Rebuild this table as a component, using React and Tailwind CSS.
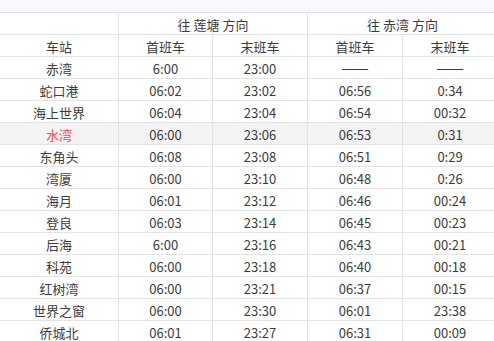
const rows = [
  ["赤湾", "6:00", "23:00", "——", "——"],
  ["蛇口港", "06:02", "23:02", "06:56", "0:34"],
  ["海上世界", "06:04", "23:04", "06:54", "00:32"],
  ["水湾", "06:00", "23:06", "06:53", "0:31", true],
  ["东角头", "06:08", "23:08", "06:51", "0:29"],
  ["湾厦", "06:00", "23:10", "06:48", "0:26"],
  ["海月", "06:01", "23:12", "06:46", "00:24"],
  ["登良", "06:03", "23:14", "06:45", "00:23"],
  ["后海", "6:00", "23:16", "06:43", "00:21"],
  ["科苑", "06:00", "23:18", "06:40", "00:18"],
  ["红树湾", "06:00", "23:21", "06:37", "00:15"],
  ["世界之窗", "06:00", "23:30", "06:01", "23:38"],
  ["侨城北", "06:01", "23:27", "06:31", "00:09"],
];

const cell = "h-[22px] p-0 pt-px border border-[#e3e3e3] text-center font-normal leading-none";

const val = (v) =>
  v === "——" ? <span className="font-['Liberation_Sans',sans-serif]">{v}</span> : v;

export default function App() {
  return (
    <div className="w-[494px] h-[341px] overflow-hidden bg-white text-[13px] text-[#3c3c3c] font-['Microsoft_YaHei','Noto_Sans_CJK_SC',sans-serif]">
      <div className="h-[12px] bg-[#f8f9fb]" />
      <table className="w-[498px] -ml-px table-fixed border-collapse">
        <colgroup>
          <col className="w-[119px]" />
          <col className="w-[94px]" />
          <col className="w-[95px]" />
          <col className="w-[95px]" />
          <col className="w-[95px]" />
        </colgroup>
        <thead>
          <tr>
            <th className={cell}></th>
            <th colSpan={2} className={cell}>往 莲塘 方向</th>
            <th colSpan={2} className={cell}>往 赤湾 方向</th>
          </tr>
          <tr>
            <th className={cell}>车站</th>
            <th className={cell}>首班车</th>
            <th className={cell}>末班车</th>
            <th className={cell}>首班车</th>
            <th className={cell}>末班车</th>
          </tr>
        </thead>
        <tbody>
          {rows.map(([name, a, b, c, d, hl]) => (
            <tr key={name} className={hl ? "bg-[#f3f3f3]" : ""}>
              <td className={cell + (hl ? " text-[#f5484c]" : "")}>{name}</td>
              <td className={cell}>{a}</td>
              <td className={cell}>{b}</td>
              <td className={cell}>{val(c)}</td>
              <td className={cell}>{val(d)}</td>
            </tr>
          ))}
        </tbody>
      </table>
    </div>
  );
}
